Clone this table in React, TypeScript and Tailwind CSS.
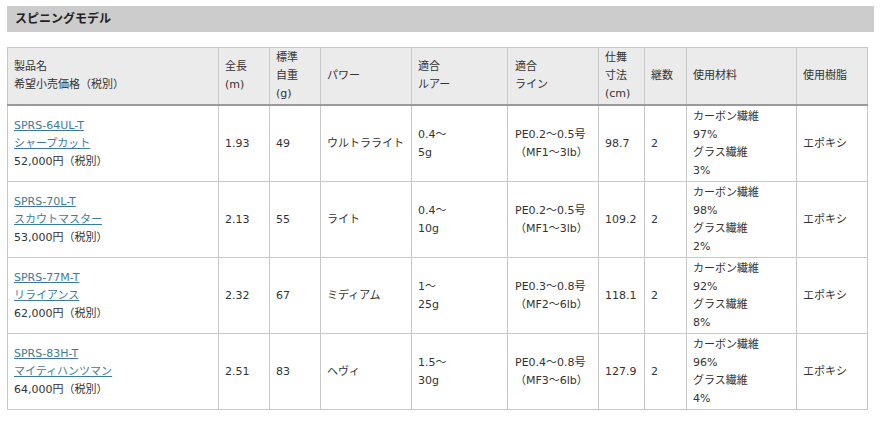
const rows = [
  {
    code: "SPRS-64UL-T",
    name: "シャープカット",
    price: "52,000円（税別）",
    length: "1.93",
    weight: "49",
    power: "ウルトラライト",
    lure: ["0.4〜", "5g"],
    line: ["PE0.2〜0.5号", "（MF1〜3lb）"],
    closed: "98.7",
    pieces: "2",
    material: ["カーボン繊維", "97%", "グラス繊維", "3%"],
  },
  {
    code: "SPRS-70L-T",
    name: "スカウトマスター",
    price: "53,000円（税別）",
    length: "2.13",
    weight: "55",
    power: "ライト",
    lure: ["0.4〜", "10g"],
    line: ["PE0.2〜0.5号", "（MF1〜3lb）"],
    closed: "109.2",
    pieces: "2",
    material: ["カーボン繊維", "98%", "グラス繊維", "2%"],
  },
  {
    code: "SPRS-77M-T",
    name: "リライアンス",
    price: "62,000円（税別）",
    length: "2.32",
    weight: "67",
    power: "ミディアム",
    lure: ["1〜", "25g"],
    line: ["PE0.3〜0.8号", "（MF2〜6lb）"],
    closed: "118.1",
    pieces: "2",
    material: ["カーボン繊維", "92%", "グラス繊維", "8%"],
  },
  {
    code: "SPRS-83H-T",
    name: "マイティハンツマン",
    price: "64,000円（税別）",
    length: "2.51",
    weight: "83",
    power: "ヘヴィ",
    lure: ["1.5〜", "30g"],
    line: ["PE0.4〜0.8号", "（MF3〜6lb）"],
    closed: "127.9",
    pieces: "2",
    material: ["カーボン繊維", "96%", "グラス繊維", "4%"],
  },
];

const th =
  "border border-[#c8c8c8] border-b-2 border-b-[#9a9a9a] bg-[#ebebeb] px-[6px] py-[1px] text-left align-middle font-normal";
const td = "border border-[#c8c8c8] px-[6px] py-[1.5px] text-left align-middle";

function Lines({ items }: { items: string[] }) {
  return (
    <>
      {items.map((t, i) => (
        <div key={i}>{t}</div>
      ))}
    </>
  );
}

export default function App() {
  return (
    <div
      className="w-[880px] h-[423px] bg-white text-[#333] text-[11px] leading-[18px] overflow-hidden"
      style={{ fontFamily: '"DejaVu Sans", "Noto Sans CJK JP", sans-serif' }}
    >
      <div className="pt-[6px] pl-[7px] pr-[6px]">
        <div className="h-[26px] bg-[#cccccc] pl-[8px] flex items-center text-[12px] font-bold text-[#222]">
          スピニングモデル
        </div>
      </div>
      <div className="pl-[7px] pt-[15px]">
        <table className="w-[860px] border-collapse table-fixed">
          <colgroup>
            <col className="w-[211px]" />
            <col className="w-[51px]" />
            <col className="w-[51px]" />
            <col className="w-[91px]" />
            <col className="w-[96px]" />
            <col className="w-[91px]" />
            <col className="w-[46px]" />
            <col className="w-[42px]" />
            <col className="w-[110px]" />
            <col className="w-[71px]" />
          </colgroup>
          <thead>
            <tr>
              <th className={th}>
                <Lines items={["製品名", "希望小売価格（税別）"]} />
              </th>
              <th className={th}>
                <Lines items={["全長", "(m)"]} />
              </th>
              <th className={th}>
                <Lines items={["標準", "自重", "(g)"]} />
              </th>
              <th className={th}>パワー</th>
              <th className={th}>
                <Lines items={["適合", "ルアー"]} />
              </th>
              <th className={th + " !pl-[7px]"}>
                <Lines items={["適合", "ライン"]} />
              </th>
              <th className={th}>
                <Lines items={["仕舞", "寸法", "(cm)"]} />
              </th>
              <th className={th}>継数</th>
              <th className={th}>使用材料</th>
              <th className={th}>使用樹脂</th>
            </tr>
          </thead>
          <tbody>
            {rows.map((r) => (
              <tr key={r.code} className="h-[76px]">
                <td className={td}>
                  <div>
                    <a href="#" className="text-[#3d7b9d] underline">
                      {r.code}
                    </a>
                  </div>
                  <div>
                    <a href="#" className="text-[#3d7b9d] underline">
                      {r.name}
                    </a>
                  </div>
                  <div>{r.price}</div>
                </td>
                <td className={td}>{r.length}</td>
                <td className={td}>{r.weight}</td>
                <td className={td}>{r.power}</td>
                <td className={td}>
                  <Lines items={r.lure} />
                </td>
                <td className={td + " !pl-[7px]"}>
                  <Lines items={r.line} />
                </td>
                <td className={td}>{r.closed}</td>
                <td className={td}>{r.pieces}</td>
                <td className={td}>
                  <Lines items={r.material} />
                </td>
                <td className={td}>エポキシ</td>
              </tr>
            ))}
          </tbody>
        </table>
      </div>
    </div>
  );
}
